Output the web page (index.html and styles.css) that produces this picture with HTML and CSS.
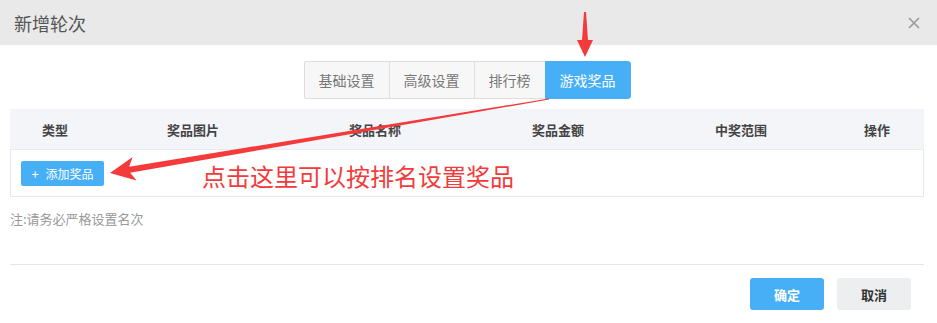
FILE: index.html
```html
<!DOCTYPE html>
<html lang="zh">
<head>
<meta charset="utf-8">
<title>新增轮次</title>
<link rel="stylesheet" href="styles.css">
</head>
<body>
<div class="dialog">
  <div class="dlg-head">
    <span class="dlg-title">新增轮次</span>
    <svg class="dlg-close" width="12" height="12" viewBox="0 0 12 12"><path d="M1 1L11 11M11 1L1 11" stroke="#999" stroke-width="1.6" fill="none"/></svg>
  </div>
  <div class="dlg-body">
    <div class="tabs">
      <div class="tab">基础设置</div>
      <div class="tab">高级设置</div>
      <div class="tab">排行榜</div>
      <div class="tab active">游戏奖品</div>
    </div>
    <div class="table">
      <div class="thead">
        <div>类型</div>
        <div>奖品图片</div>
        <div>奖品名称</div>
        <div>奖品金额</div>
        <div>中奖范围</div>
        <div>操作</div>
      </div>
      <div class="trow">
        <button class="add-btn"><span class="plus">+</span>添加奖品</button>
        <span class="hint">点击这里可以按排名设置奖品</span>
      </div>
    </div>
    <div class="note">注:请务必严格设置名次</div>
    <div class="divider"></div>
    <div class="footer">
      <button class="btn ok">确定</button>
      <button class="btn cancel">取消</button>
    </div>
  </div>
  <svg class="arrows" width="937" height="323" viewBox="0 0 937 323">
    <polygon fill="#f43a3a" points="585,57 577,40 582,40 584,12 586,12 588,40 593,40"/>
    <polygon fill="#f43a3a" points="110,173 132.6,157 129.2,166.7 548.9,98.5 549.1,99.5 130.2,172.7 136.6,180.6"/>
  </svg>
</div>
</body>
</html>
```
FILE: styles.css
```css
* { box-sizing: border-box; }
html, body { margin: 0; padding: 0; background: #fff; }
body {
  font-family: "Noto Sans CJK SC", "Noto Sans", sans-serif;
  width: 937px;
  height: 323px;
  overflow: hidden;
}
.dialog { position: relative; width: 937px; height: 323px; }
.dlg-head {
  height: 45px;
  background: #e9e9e9;
  display: flex;
  align-items: center;
  justify-content: space-between;
  padding: 0 17px 0 14px;
}
.dlg-title { font-size: 18px; color: #555; line-height: 1; }
.dlg-close { display: block; margin-top: 1px; }
.dlg-body { padding: 0 13px 0 10px; }
.tabs {
  display: flex;
  justify-content: center;
  margin-top: 16px;
  height: 38px;
}
.tab {
  height: 38px;
  line-height: 36px;
  padding: 0 14px;
  font-size: 14px;
  color: #777;
  background: #f7f7f7;
  border: 1px solid #e4dcdc;
  margin-left: -1px;
}
.tab:first-child { border-radius: 2px 0 0 2px; margin-left: 0; }
.tab.active {
  background: #47aff6;
  border-color: #47aff6;
  color: #fff;
  border-radius: 0 3px 3px 0;
}
.table { margin-top: 10px; }
.thead {
  display: grid;
  grid-template-columns: 90px 186px 178px 188px 178px 94px;
  height: 41px;
  background: #f4f5f9;
  border-bottom: 1px solid #e9eaee;
  align-items: center;
  text-align: center;
  font-size: 13px;
  font-weight: bold;
  color: #444;
}
.trow {
  height: 47px;
  border: 1px solid #e8e8e8;
  border-top: none;
  display: flex;
  align-items: center;
  padding-left: 10px;
}
.add-btn {
  width: 83px;
  height: 25px;
  margin-top: 1px;
  border: none;
  border-radius: 2px;
  background: #47aff6;
  color: #fff;
  font-family: inherit;
  font-size: 12px;
  padding: 0;
  display: flex;
  align-items: center;
  justify-content: center;
}
.plus { margin-right: 7px; font-size: 13px; }
.hint {
  margin-left: 98px;
  margin-top: 5px;
  font-size: 24px;
  color: #f43a3a;
  line-height: 1;
}
.note {
  margin-top: 13px;
  font-size: 13px;
  color: #999;
  line-height: 18px;
}
.divider {
  margin-top: 36px;
  height: 1px;
  background: #e3e5ea;
}
.footer {
  display: flex;
  justify-content: flex-end;
  gap: 13px;
  padding-right: 13px;
  margin-top: 13px;
}
.btn {
  width: 74px;
  height: 32px;
  border: none;
  border-radius: 3px;
  font-family: inherit;
  font-size: 13px;
  font-weight: bold;
  padding: 0;
}
.btn.ok { background: #47aff6; color: #fff; }
.btn.cancel { background: #eceeef; color: #333; }
.arrows { position: absolute; left: 0; top: 0; pointer-events: none; }
```
